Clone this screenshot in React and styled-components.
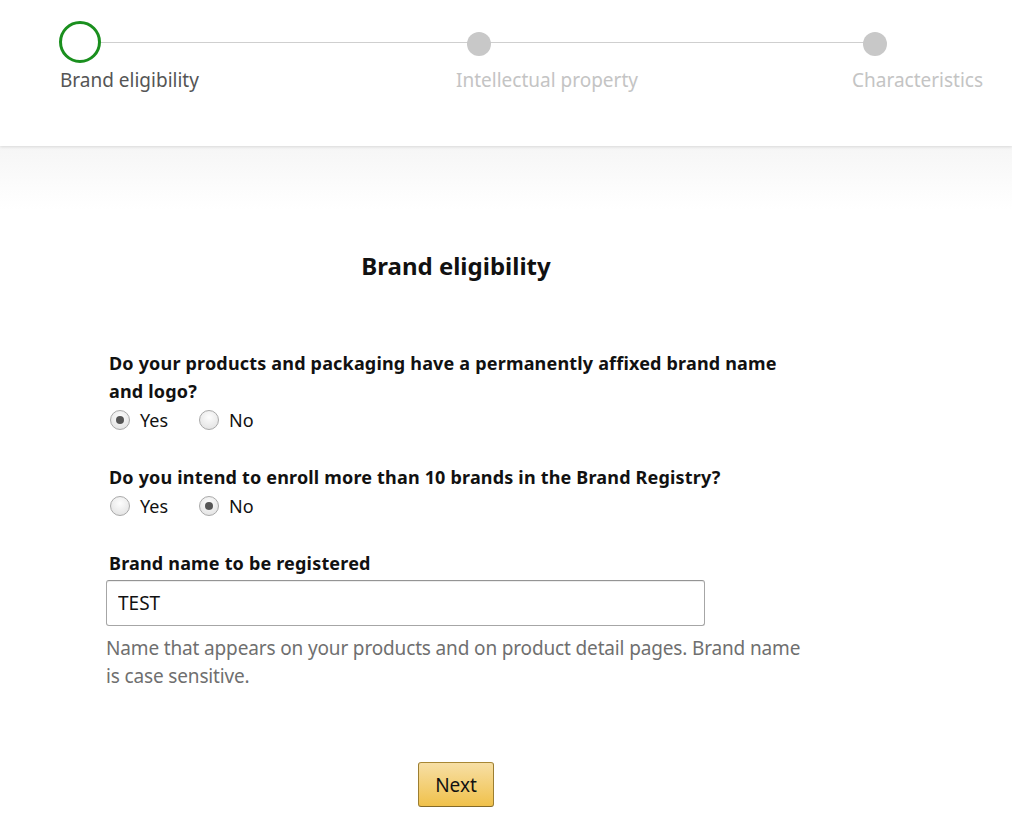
import React, { useState } from 'react';
import styled, { createGlobalStyle } from 'styled-components';

const GlobalStyle = createGlobalStyle`
    html, body {
        margin: 0;
        padding: 0;
        background: #fff;
        font-family: "Noto Sans", "Open Sans", Arial, sans-serif;
        color: #111;
    }
`;

const Header = styled.header`
    height: 146px;
    background: #fff;
    box-shadow: 0 1px 3px rgba(0, 0, 0, 0.12);
    position: relative;
    z-index: 1;
`;

const Stepper = styled.div`
    display: grid;
    grid-template-columns: 396px 396px 1fr;
    padding: 21px 0 0 59px;
    position: relative;
`;

const Step = styled.div`
    display: flex;
    flex-direction: column;
    align-items: flex-start;
`;

const Dot = styled.span`
    box-sizing: border-box;
    display: block;
    width: ${(p) => (p.$active ? 42 : 24)}px;
    height: ${(p) => (p.$active ? 42 : 24)}px;
    margin: ${(p) => (p.$active ? '0' : '11px 0 7px 12px')};
    border-radius: 50%;
    border: ${(p) => (p.$active ? '3px solid #1a8f1e' : 'none')};
    background: ${(p) => (p.$active ? '#fff' : '#c8c8c8')};
    position: relative;
    z-index: 1;
`;

const StepLabel = styled.span`
    margin-top: 4px;
    padding-left: 1px;
    font-size: 19px;
    color: ${(p) => (p.$active ? '#555' : '#c4c4c4')};
`;

const Track = styled.div`
    position: absolute;
    top: 42px;
    left: 100px;
    width: 770px;
    height: 1px;
    background: #cfcfcf;
`;

const Fade = styled.div`
    height: 64px;
    background: linear-gradient(#f6f6f6, #fff);
`;

const Main = styled.main`
    width: 700px;
    margin: 0 0 0 106px;
`;

const Title = styled.h2`
    margin: 39px 0 67px;
    text-align: center;
    font-size: 24px;
    font-weight: 700;
    color: #111;
`;

const Question = styled.fieldset`
    border: 0;
    margin: 0 0 28px;
    padding: 0 0 0 3px;
`;

const Legend = styled.div`
    font-size: 18px;
    font-weight: 700;
    line-height: 28px;
    letter-spacing: 0.18px;
    color: #111;
    width: 690px;
`;

const Options = styled.div`
    display: flex;
    gap: 30px;
    height: 30px;
    align-items: center;
`;

const Option = styled.label`
    display: flex;
    align-items: center;
    gap: 10px;
    font-size: 18px;
    color: #111;
    cursor: pointer;
`;

const RadioMark = styled.span`
    box-sizing: border-box;
    width: 20px;
    height: 20px;
    margin-left: 1px;
    border-radius: 50%;
    border: 1px solid #a9a9a9;
    background: radial-gradient(circle at 50% 35%, #fdfdfd, #dedede);
    display: flex;
    align-items: center;
    justify-content: center;
    &::after {
        content: '';
        width: 8px;
        height: 8px;
        border-radius: 50%;
        background: ${(p) => (p.$checked ? '#555' : 'transparent')};
    }
`;

const FieldLabel = styled.div`
    font-size: 18px;
    font-weight: 700;
    line-height: 28px;
    letter-spacing: 0.18px;
    padding-left: 3px;
    margin-top: 8px;
`;

const Input = styled.input`
    box-sizing: border-box;
    display: block;
    width: 599px;
    height: 46px;
    margin-top: 3px;
    padding: 0 11px;
    border: 1px solid #a6a6a6;
    border-top-color: #949494;
    border-radius: 3px;
    font-family: inherit;
    font-size: 19px;
    color: #111;
    box-shadow: inset 0 1px 0 rgba(0, 0, 0, 0.07);
    outline: none;
`;

const Hint = styled.p`
    margin: 8px 0 0;
    font-size: 19px;
    line-height: 28px;
    letter-spacing: -0.15px;
    color: #6f6f6f;
`;

const Actions = styled.div`
    display: flex;
    justify-content: center;
    margin-top: 72px;
`;

const NextButton = styled.button`
    width: 76px;
    height: 45px;
    border: 1px solid #a88734;
    border-color: #a88734 #9c7e31 #846a29;
    border-radius: 3px;
    background: linear-gradient(#f7dfa5, #f0c14b);
    font-family: inherit;
    font-size: 19px;
    color: #111;
    cursor: pointer;
`;

const Radio = ({ checked, onSelect, children }) => (
    <Option onClick={onSelect}>
        <RadioMark $checked={checked} />
        {children}
    </Option>
);

const App = () => {
    const [affixed, setAffixed] = useState('yes');
    const [many, setMany] = useState('no');
    const [brand, setBrand] = useState('TEST');

    return (
        <>
            <GlobalStyle />
            <Header>
                <Stepper>
                    <Track />
                    <Step>
                        <Dot $active />
                        <StepLabel $active>Brand eligibility</StepLabel>
                    </Step>
                    <Step>
                        <Dot />
                        <StepLabel>Intellectual property</StepLabel>
                    </Step>
                    <Step>
                        <Dot />
                        <StepLabel>Characteristics</StepLabel>
                    </Step>
                </Stepper>
            </Header>
            <Fade />
            <Main>
                <Title>Brand eligibility</Title>
                <Question>
                    <Legend>
                        Do your products and packaging have a permanently affixed brand name and logo?
                    </Legend>
                    <Options>
                        <Radio checked={affixed === 'yes'} onSelect={() => setAffixed('yes')}>Yes</Radio>
                        <Radio checked={affixed === 'no'} onSelect={() => setAffixed('no')}>No</Radio>
                    </Options>
                </Question>
                <Question>
                    <Legend>Do you intend to enroll more than 10 brands in the Brand Registry?</Legend>
                    <Options>
                        <Radio checked={many === 'yes'} onSelect={() => setMany('yes')}>Yes</Radio>
                        <Radio checked={many === 'no'} onSelect={() => setMany('no')}>No</Radio>
                    </Options>
                </Question>
                <FieldLabel>Brand name to be registered</FieldLabel>
                <Input value={brand} onChange={(e) => setBrand(e.target.value)} />
                <Hint>
                    Name that appears on your products and on product detail pages. Brand name is case
                    sensitive.
                </Hint>
                <Actions>
                    <NextButton type="button">Next</NextButton>
                </Actions>
            </Main>
        </>
    );
};

export default App;
